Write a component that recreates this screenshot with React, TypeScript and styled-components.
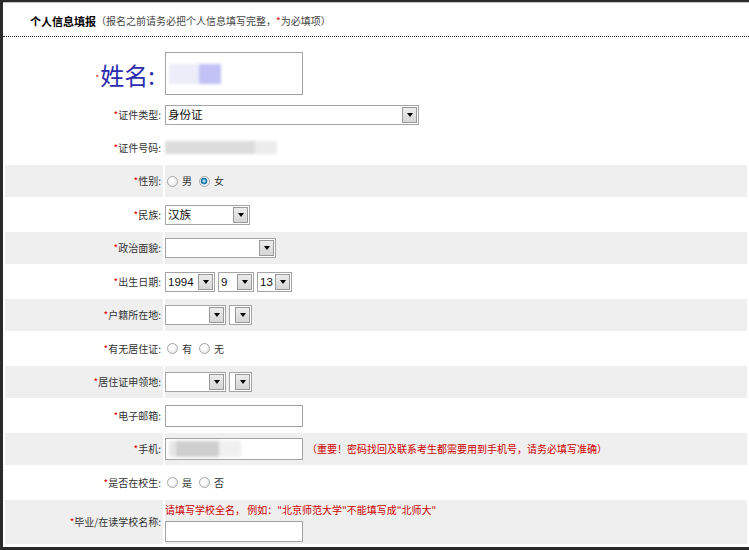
import React from 'react'
import styled, { createGlobalStyle } from 'styled-components'

const GlobalStyle = createGlobalStyle`
  html, body {
    margin: 0;
    padding: 0;
    background: #fff;
  }
  body {
    font-family: 'Noto Sans CJK SC', 'Liberation Sans', sans-serif;
  }
`

const CJK = `'Noto Sans CJK SC', sans-serif`
const SELECT_FONT = `'Liberation Sans', 'Noto Sans CJK SC', sans-serif`

type Opt = { w: number; value?: string }

const Select: React.FC<Opt> = ({ w, value }) => (
  <S.Select $w={w}>
    <S.SelectText>{value}</S.SelectText>
    <S.SelectBtn />
  </S.Select>
)

const Radio: React.FC<{ on?: boolean; label: string }> = ({ on, label }) => (
  <S.RadioItem>
    <S.Radio $on={on} />
    <span>{label}</span>
  </S.RadioItem>
)

const Req: React.FC<{ children: React.ReactNode }> = ({ children }) => (
  <>
    <S.Star>*</S.Star>
    {children}
  </>
)

export default function App() {
  return (
    <>
      <GlobalStyle />
      <S.Frame>
        <S.Header>
          <b>个人信息填报</b>
          <S.HeaderNote>
            （报名之前请务必把个人信息填写完整，<S.Star>*</S.Star>为必填项）
          </S.HeaderNote>
        </S.Header>
        <S.Table>
          <tbody>
            <S.Row $h={58}>
              <S.NameLabel>
                <S.NameStar>*</S.NameStar>姓名:
              </S.NameLabel>
              <S.NameField>
                <S.Input $h={43}>
                  <S.Blur $w={52} $h={20} $bg="linear-gradient(to right, #ededfa 0 58%, #c2c2f6 58%)" />
                </S.Input>
              </S.NameField>
            </S.Row>
            <S.Row $h={31}>
              <S.Label><Req>证件类型:</Req></S.Label>
              <S.Field><Select w={254} value="身份证" /></S.Field>
            </S.Row>
            <S.Row $h={31}>
              <S.Label><Req>证件号码:</Req></S.Label>
              <S.Field>
                <S.Blur $w={112} $h={13} $bg="linear-gradient(to right, #dcdcdc 0 80%, #ececec 80%)" />
              </S.Field>
            </S.Row>
            <S.Row $h={32} $shade>
              <S.Label $shade><Req>性别:</Req></S.Label>
              <S.Field $shade>
                <S.Radios>
                  <Radio label="男" />
                  <Radio label="女" on />
                </S.Radios>
              </S.Field>
            </S.Row>
            <S.Row $h={31}>
              <S.Label><Req>民族:</Req></S.Label>
              <S.Field><Select w={85} value="汉族" /></S.Field>
            </S.Row>
            <S.Row $h={32} $shade>
              <S.Label $shade><Req>政治面貌:</Req></S.Label>
              <S.Field $shade><Select w={111} /></S.Field>
            </S.Row>
            <S.Row $h={31}>
              <S.Label><Req>出生日期:</Req></S.Label>
              <S.Field>
                <S.Selects>
                  <Select w={50} value="1994" />
                  <Select w={36} value="9" />
                  <Select w={35} value="13" />
                </S.Selects>
              </S.Field>
            </S.Row>
            <S.Row $h={32} $shade>
              <S.Label $shade><Req>户籍所在地:</Req></S.Label>
              <S.Field $shade>
                <S.Selects>
                  <Select w={61} />
                  <Select w={23} />
                </S.Selects>
              </S.Field>
            </S.Row>
            <S.Row $h={31}>
              <S.Label><Req>有无居住证:</Req></S.Label>
              <S.Field>
                <S.Radios>
                  <Radio label="有" />
                  <Radio label="无" />
                </S.Radios>
              </S.Field>
            </S.Row>
            <S.Row $h={32} $shade>
              <S.Label $shade><Req>居住证申领地:</Req></S.Label>
              <S.Field $shade>
                <S.Selects>
                  <Select w={61} />
                  <Select w={23} />
                </S.Selects>
              </S.Field>
            </S.Row>
            <S.Row $h={31}>
              <S.Label><Req>电子邮箱:</Req></S.Label>
              <S.Field><S.Input $h={22} /></S.Field>
            </S.Row>
            <S.Row $h={32} $shade>
              <S.Label $shade><Req>手机:</Req></S.Label>
              <S.Field $shade>
                <S.Inline>
                  <S.Input $h={22}>
                    <S.Blur $w={72} $h={16} $bg="linear-gradient(to right, #e6e6e6 0 10%, #cfcfcf 10% 70%, #f0f0f0 70%)" />
                  </S.Input>
                  <S.Note>（重要！密码找回及联系考生都需要用到手机号，请务必填写准确）</S.Note>
                </S.Inline>
              </S.Field>
            </S.Row>
            <S.Row $h={31}>
              <S.Label><Req>是否在校生:</Req></S.Label>
              <S.Field>
                <S.Radios>
                  <Radio label="是" />
                  <Radio label="否" />
                </S.Radios>
              </S.Field>
            </S.Row>
            <S.Row $h={44} $shade>
              <S.Label $shade><Req>毕业/在读学校名称:</Req></S.Label>
              <S.SchoolField $shade>
                <S.Note $flush>请填写学校全名， 例如："北京师范大学"不能填写成"北师大"</S.Note>
                <S.Input $h={21} />
              </S.SchoolField>
            </S.Row>
          </tbody>
        </S.Table>
      </S.Frame>
    </>
  )
}

const S = {
  Frame: styled.div`
    width: 749px;
    height: 550px;
    box-sizing: border-box;
    border-top: 2px solid #2a2a2a;
    border-left: 3px solid #2a2a2a;
    border-bottom: 3px solid #2a2a2a;
    box-shadow: inset 0 1px 0 #c4c4c4;
    overflow: hidden;
    background: #fff;
  `,

  Header: styled.div`
    height: 35px;
    box-sizing: border-box;
    padding: 3px 0 0 27px;
    display: flex;
    align-items: center;
    border-bottom: 1px dotted #222;
    font-family: ${CJK};
    font-size: 11px;
    line-height: 14px;
    color: #000;

    b {
      font-weight: 700;
    }
  `,

  HeaderNote: styled.span`
    font-size: 10px;
    color: #444;
  `,

  Star: styled.span`
    color: #e00000;
  `,

  Table: styled.table`
    width: 746px;
    border-collapse: separate;
    border-spacing: 2px;
    font-family: ${CJK};
    font-size: 10px;
    line-height: 12px;
    color: #333;
  `,

  Row: styled.tr<{ $h: number; $shade?: boolean }>`
    height: ${(p) => p.$h}px;
  `,

  Label: styled.td<{ $shade?: boolean }>`
    width: 156px;
    padding: 0 2px 0 0;
    text-align: right;
    vertical-align: middle;
    white-space: nowrap;
    background: ${(p) => (p.$shade ? '#efefef' : '#fff')};
  `,

  Field: styled.td<{ $shade?: boolean }>`
    padding: 0;
    vertical-align: middle;
    background: ${(p) => (p.$shade ? '#efefef' : '#fff')};
  `,

  NameLabel: styled.td`
    width: 150px;
    padding: 0 8px 7px 0;
    text-align: right;
    vertical-align: bottom;
    font-size: 24px;
    line-height: 30px;
    color: #2c2cb0;
  `,

  NameStar: styled.span`
    font-size: 8px;
    line-height: 8px;
    color: #e00000;
    vertical-align: middle;
    margin-right: 1px;
  `,

  NameField: styled.td`
    padding: 0 0 2px 0;
    vertical-align: bottom;
  `,

  SchoolField: styled.td<{ $shade?: boolean }>`
    padding: 3px 0 0 0;
    vertical-align: top;
    background: ${(p) => (p.$shade ? '#efefef' : '#fff')};

    & > div {
      margin-top: 4px;
    }
  `,

  Input: styled.div<{ $h: number }>`
    width: 138px;
    height: ${(p) => p.$h}px;
    box-sizing: border-box;
    border: 1px solid #a3a3a3;
    background: #fff;
    display: flex;
    align-items: center;
    padding-left: 3px;
  `,

  Blur: styled.span<{ $w: number; $h: number; $bg: string }>`
    display: inline-block;
    width: ${(p) => p.$w}px;
    height: ${(p) => p.$h}px;
    background: ${(p) => p.$bg};
    filter: blur(1.5px);
    vertical-align: middle;
  `,

  Inline: styled.div`
    display: flex;
    align-items: center;
  `,

  Note: styled.span<{ $flush?: boolean }>`
    display: block;
    margin-left: ${(p) => (p.$flush ? 0 : 4)}px;
    font-size: 10px;
    line-height: 14px;
    color: #cc0000;
    white-space: nowrap;
  `,

  Selects: styled.div`
    display: flex;
    align-items: center;
    gap: 3px;
  `,

  Select: styled.div<{ $w: number }>`
    display: inline-flex;
    width: ${(p) => p.$w}px;
    height: 20px;
    box-sizing: border-box;
    border: 1px solid #a5a5a5;
    background: #fff;
    font-family: ${SELECT_FONT};
    font-size: 11.5px;
    line-height: 18px;
    color: #111;
    vertical-align: middle;
  `,

  SelectText: styled.span`
    flex: 1;
    min-width: 0;
    padding-left: 2px;
    overflow: hidden;
    white-space: nowrap;
  `,

  SelectBtn: styled.span`
    flex: none;
    width: 15px;
    margin: 1px;
    box-sizing: border-box;
    border: 1px solid #999;
    background: linear-gradient(#ececec, #d6d6d6);
    display: flex;
    align-items: center;
    justify-content: center;

    &::after {
      content: '';
      border-left: 3.5px solid transparent;
      border-right: 3.5px solid transparent;
      border-top: 4px solid #000;
    }
  `,

  Radios: styled.div`
    display: flex;
    align-items: center;
    gap: 7px;
    padding-left: 2px;
  `,

  RadioItem: styled.label`
    display: inline-flex;
    align-items: center;
    gap: 4px;
  `,

  Radio: styled.span<{ $on?: boolean }>`
    display: inline-block;
    width: 11px;
    height: 11px;
    box-sizing: border-box;
    border-radius: 50%;
    border: 1px solid #a8a8a8;
    background: ${(p) =>
      p.$on
        ? 'radial-gradient(circle at 45% 45%, #9fe0f0 0 1px, #2a8ab8 2px, #1d6f95 3px, #d8e8ee 3.6px, #f4f4f4 4.5px)'
        : 'radial-gradient(circle at 40% 40%, #fff 0 2px, #ececec 5px)'};
  `,
}
